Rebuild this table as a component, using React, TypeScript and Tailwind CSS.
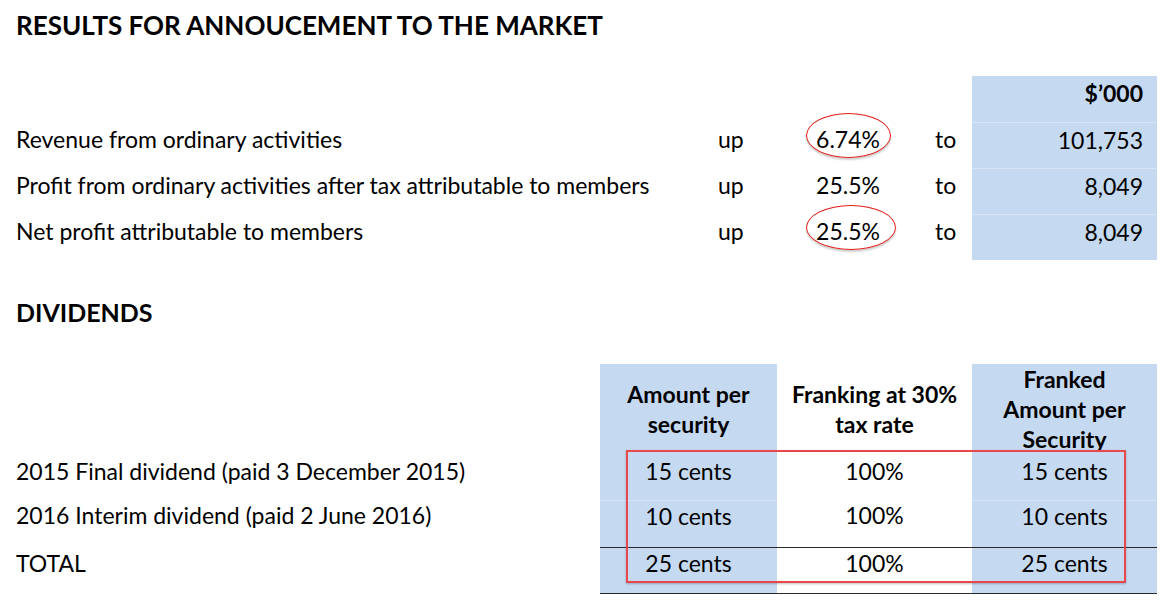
// Results announcement sheet: headline figures table + dividends table,
// with the red call-out marks drawn over the top.

const FONT = 'font-["Lato","Liberation_Sans",sans-serif]'

type HeadlineRow = { label: string; pct: string; value: string }

const HEADLINE: HeadlineRow[] = [
  { label: 'Revenue from ordinary activities', pct: '6.74%', value: '101,753' },
  { label: 'Profit from ordinary activities after tax attributable to members', pct: '25.5%', value: '8,049' },
  { label: 'Net profit attributable to members', pct: '25.5%', value: '8,049' },
]

const DIVIDENDS = [
  { label: '2015 Final dividend (paid 3 December 2015)', amount: '15 cents', franking: '100%', franked: '15 cents' },
  { label: '2016 Interim dividend (paid 2 June 2016)', amount: '10 cents', franking: '100%', franked: '10 cents' },
]

function Headline() {
  return (
    <div className="grid grid-cols-[702px_72px_116px_66px_185px] text-[23px] leading-[34px] text-black">
      {/* header row: only the $'000 cell is filled */}
      <div className="col-span-4 h-[46px]" />
      <div className="h-[46px] bg-[#c5d9f1] pr-[14px] text-right font-bold">$’000</div>
      {HEADLINE.map((r, i) => (
        <div key={r.label} className="contents">
          <div className="h-[46px]">{r.label}</div>
          <div>up</div>
          <div className="text-center">{r.pct}</div>
          <div className="pl-[29px]">to</div>
          <div className={`h-[46px] border-t border-[#d8e4f4] bg-[#c5d9f1] pr-[14px] text-right ${i === 1 ? 'h-[45px]' : ''}`}>
            {r.value}
          </div>
        </div>
      ))}
    </div>
  )
}

function Dividends() {
  const blue = 'bg-[#c5d9f1]'
  return (
    <div className="grid grid-cols-[584px_177px_195px_185px] text-[23px] leading-[34px] text-black">
      <div className="h-[90px]" />
      <div className={`flex h-[90px] items-center justify-center text-center font-bold leading-[30px] ${blue}`}>
        Amount per<br />security
      </div>
      <div className="flex h-[90px] items-center justify-center text-center font-bold leading-[30px]">
        Franking at 30%<br />tax rate
      </div>
      <div className={`flex h-[90px] items-center justify-center text-center font-bold leading-[30px] ${blue}`}>
        Franked<br />Amount per<br />Security
      </div>

      {DIVIDENDS.map((d, i) => (
        <div key={d.label} className={`contents ${i === 1 ? 'leading-[31px]' : ''}`}>
          <div className={i === 0 ? 'h-[46px]' : 'h-[47px]'}>{d.label}</div>
          <div className={`text-center ${blue} ${i === 1 ? 'border-t border-[#d8e4f4]' : ''}`}>{d.amount}</div>
          <div className="text-center">{d.franking}</div>
          <div className={`text-center ${blue} ${i === 1 ? 'border-t border-[#d8e4f4]' : ''}`}>{d.franked}</div>
        </div>
      ))}

      {/* total row, ruled above and below */}
      <div className="h-[47px] leading-[32px]">TOTAL</div>
      <div className={`border-y border-[#2b2b2b] text-center leading-[31px] ${blue}`}>25 cents</div>
      <div className="border-y border-[#2b2b2b] text-center leading-[31px]">100%</div>
      <div className={`border-y border-[#2b2b2b] text-center leading-[31px] ${blue}`}>25 cents</div>
    </div>
  )
}

export default function App() {
  return (
    <div className={`relative h-[609px] w-[1172px] overflow-hidden bg-white pl-4 ${FONT}`}>
      <h1 className="pt-[6px] text-[26px] leading-[38px] font-bold">RESULTS FOR ANNOUCEMENT TO THE MARKET</h1>
      <div className="mt-[32px]">
        <Headline />
      </div>
      <h2 className="mt-[35px] text-[25px] leading-[34px] font-bold">DIVIDENDS</h2>
      <div className="mt-[35px]">
        <Dividends />
      </div>

      {/* red call-out marks laid over the figures */}
      <div className="pointer-events-none absolute top-[113px] left-[806px] h-[45px] w-[85px] rounded-[50%] border-[1.5px] border-[#e0201b] shadow-[0_2px_2px_rgba(0,0,0,0.2)]" />
      <div className="pointer-events-none absolute top-[205px] left-[806px] h-[45px] w-[90px] rounded-[50%] border-[1.5px] border-[#e0201b] shadow-[0_2px_2px_rgba(0,0,0,0.2)]" />
      <div className="pointer-events-none absolute top-[450px] left-[626px] h-[133px] w-[500px] border-2 border-[#e8474c] shadow-[0_1px_2px_rgba(0,0,0,0.25)]" />
    </div>
  )
}
